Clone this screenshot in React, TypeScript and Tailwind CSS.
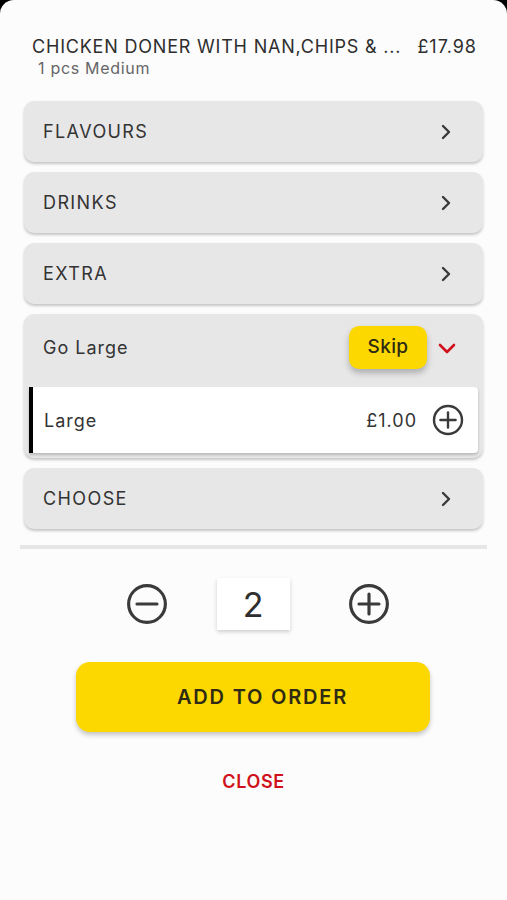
const font = { fontFamily: "Inter, 'Noto Sans', sans-serif" };

function Chevron() {
  return (
    <svg width="14" height="18" viewBox="0 0 14 18" fill="none">
      <path d="M4 3l6 6-6 6" stroke="#3a3a3a" strokeWidth="2.4" strokeLinecap="round" strokeLinejoin="round" />
    </svg>
  );
}

function CircleIcon({ size, plus }: { size: number; plus?: boolean }) {
  return (
    <svg width={size} height={size} viewBox="0 0 40 40" fill="none">
      <circle cx="20" cy="20" r="17.5" stroke="#3a3a3a" strokeWidth="3" />
      <path d="M10.5 20h19" stroke="#3a3a3a" strokeWidth="3" strokeLinecap="round" />
      {plus && <path d="M20 10.5v19" stroke="#3a3a3a" strokeWidth="3" strokeLinecap="round" />}
    </svg>
  );
}

function OptionCard({ label }: { label: string }) {
  return (
    <div className="flex h-[61px] items-center justify-between rounded-[10px] bg-[#e7e7e7] pl-[19px] pr-[30px] shadow-[0_2px_3px_rgba(0,0,0,0.22)]">
      <span className="text-[18px] tracking-[1.4px] text-[#333]">{label}</span>
      <Chevron />
    </div>
  );
}

export default function App() {
  return (
    <div className="min-h-[900px] bg-black" style={font}>
      <div className="min-h-[900px] rounded-t-[14px] bg-[#fcfcfc]">
        <div className="pl-[32px] pr-[30px] pt-[36px]">
          <div className="flex items-center justify-between text-[18px] leading-[22px] text-[#2e2e2e]">
            <span className="tracking-[0.8px]">CHICKEN DONER WITH NAN,CHIPS &amp; ...</span>
            <span className="tracking-[1px]">£17.98</span>
          </div>
          <div className="pl-[6px] text-[16px] leading-[20px] tracking-[0.7px] text-[#666]">1 pcs Medium</div>
        </div>

        <div className="mx-[24px] mt-[23px] flex flex-col gap-[10px]">
          <OptionCard label="FLAVOURS" />
          <OptionCard label="DRINKS" />
          <OptionCard label="EXTRA" />

          <div className="rounded-[10px] bg-[#e7e7e7] pb-[5px] shadow-[0_2px_3px_rgba(0,0,0,0.22)]">
            <div className="flex h-[73px] items-center justify-between pb-[6px] pl-[19px] pr-[26px]">
              <span className="text-[18px] tracking-[1px] text-[#333]">Go Large</span>
              <div className="flex items-center gap-[10px]">
                <div className="flex h-[43px] w-[78px] items-center justify-center rounded-[10px] bg-[#fdd800] text-[19px] font-medium tracking-[0.4px] text-[#2e2a14] shadow-[0_4px_6px_rgba(0,0,0,0.25)]">
                  Skip
                </div>
                <svg width="20" height="14" viewBox="0 0 20 14" fill="none">
                  <path d="M3 4l7 7 7-7" stroke="#d0111b" strokeWidth="2.6" strokeLinecap="round" strokeLinejoin="round" />
                </svg>
              </div>
            </div>
            <div className="mx-[5px] flex h-[66px] items-center justify-between rounded-r-[4px] border-l-[4px] border-black bg-white pl-[11px] pr-[14px] shadow-[0_2px_3px_rgba(0,0,0,0.2)]">
              <span className="text-[18px] tracking-[1px] text-[#333]">Large</span>
              <div className="flex items-center gap-[15px]">
                <span className="text-[18px] tracking-[1px] text-[#333]">£1.00</span>
                <CircleIcon size={32} plus />
              </div>
            </div>
          </div>

          <OptionCard label="CHOOSE" />
        </div>

        <div className="mx-[20px] mt-[16px] h-[4px] bg-[#e6e6e6]" />

        <div className="mt-[29px] flex items-center justify-center pl-[8px]">
          <CircleIcon size={42} />
          <div className="ml-[49px] mr-[58px] flex h-[52px] w-[73px] items-center justify-center bg-white text-[34px] text-[#2e2e2e] shadow-[0_2px_4px_rgba(0,0,0,0.18)]">
            2
          </div>
          <CircleIcon size={42} plus />
        </div>

        <div className="mt-[32px] flex justify-center pr-[2px]">
          <div className="flex h-[70px] w-[354px] items-center justify-center rounded-[14px] bg-[#fdd800] pl-[20px] text-[20px] font-semibold tracking-[1.8px] text-[#2e2a14] shadow-[0_3px_5px_rgba(0,0,0,0.22)]">
            ADD TO ORDER
          </div>
        </div>

        <div className="mt-[36px] text-center text-[18px] font-semibold tracking-[0.6px] text-[#d0111b]">CLOSE</div>
      </div>
    </div>
  );
}
